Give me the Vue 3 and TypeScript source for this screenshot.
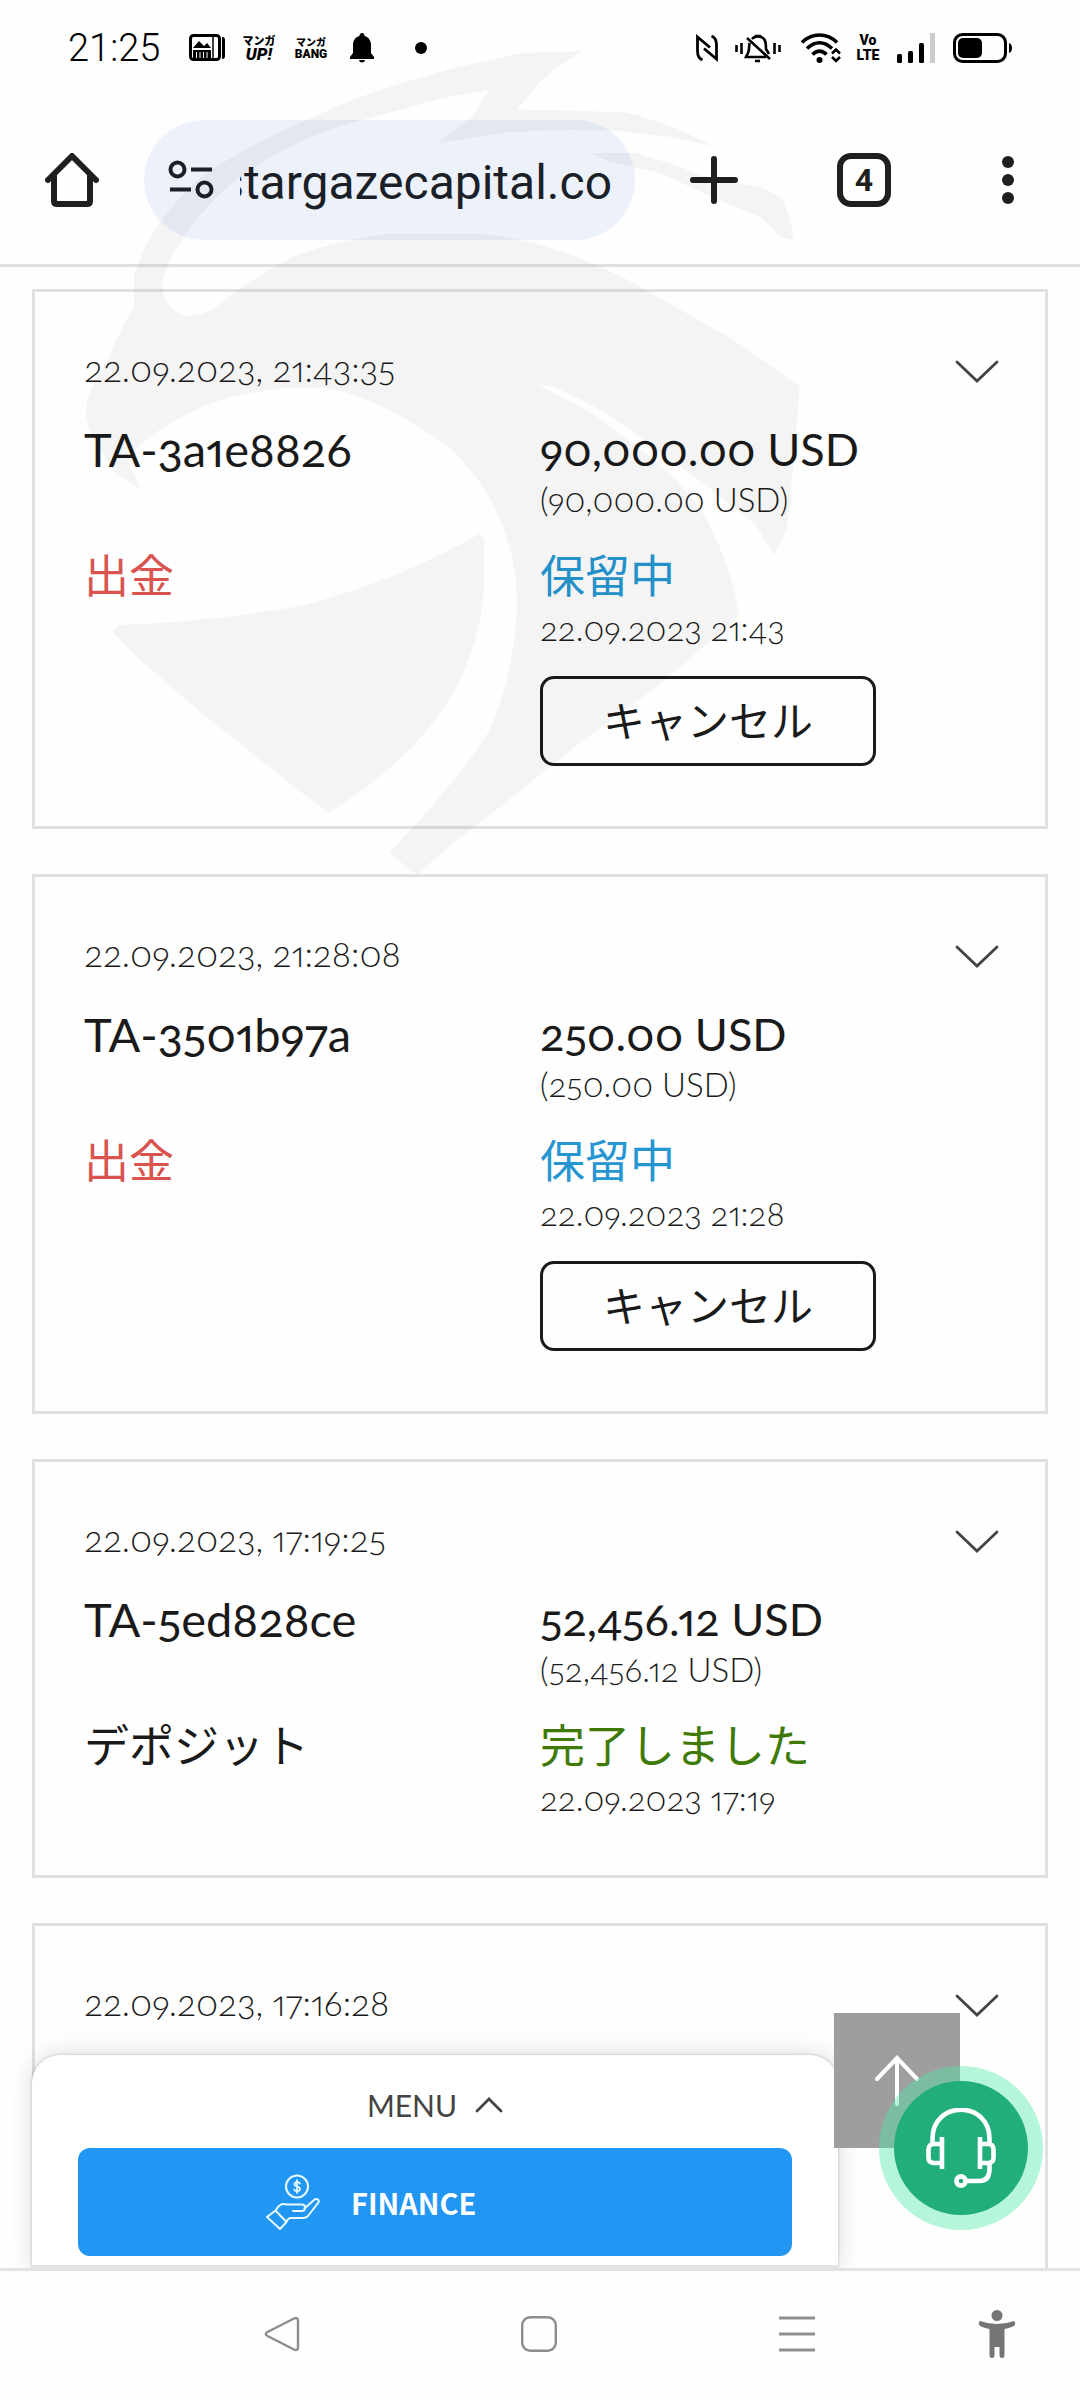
<script setup lang="ts">
import { ref } from 'vue'

interface Transaction {
  date: string
  id: string
  amount: string
  kind: string
  kindTone: 'red' | 'ink'
  status: string
  statusTone: 'blue' | 'green'
  updated: string
  cancellable: boolean
}

const address = ref('stargazecapital.co')

const transactions: Transaction[] = [
  { date: '22.09.2023, 21:43:35', id: 'TA-3a1e8826', amount: '90,000.00 USD', kind: '出金', kindTone: 'red', status: '保留中', statusTone: 'blue', updated: '22.09.2023 21:43', cancellable: true },
  { date: '22.09.2023, 21:28:08', id: 'TA-3501b97a', amount: '250.00 USD', kind: '出金', kindTone: 'red', status: '保留中', statusTone: 'blue', updated: '22.09.2023 21:28', cancellable: true },
  { date: '22.09.2023, 17:19:25', id: 'TA-5ed828ce', amount: '52,456.12 USD', kind: 'デポジット', kindTone: 'ink', status: '完了しました', statusTone: 'green', updated: '22.09.2023 17:19', cancellable: false },
]
const nextDate = '22.09.2023, 17:16:28'
</script>

<template>
  <div class="screen">
    <header class="status-bar">
      <div class="status-left">
        <time class="clock">21:25</time>
        <svg class="s-photo" width="37" height="28" viewBox="0 0 37 28">
          <rect x="1.5" y="1.5" width="29" height="24" rx="3" fill="none" stroke="#000" stroke-width="3" />
          <path d="M24 2v23" stroke="#000" stroke-width="1.5" />
          <path d="M4 14l6-7 5 5 3-3 4 5z" />
          <path d="M4 16h18v8H4z" />
          <path d="M7.500 18v6M11 18v6M14.500 18v6M18 18v6" stroke="#fff" stroke-width="1" />
          <path d="M33 3q3 0 3 3v16q0 3-3 3z" />
        </svg>
        <span class="app-tag manga-up"><span>マンガ</span><b>UP!</b></span>
        <span class="app-tag manga-bang"><span>マンガ</span><b>BANG</b></span>
        <svg class="s-bell" width="24" height="30" viewBox="0 0 24 30">
          <path d="M12 0q2.500 0 2.500 3C19 4 21 8 21 12v8l3 4v2H0v-2l3-4v-8C3 8 5 4 9.500 3 9.500 0 12 0 12 0z" />
          <path d="M9 27h6q-.5 2.500-3 2.500T9 27z" />
        </svg>
        <span class="s-dot"></span>
      </div>
      <div class="status-right">
        <svg width="22" height="28" viewBox="0 0 22 28" fill="none" stroke="#000" stroke-width="2.800">
          <path d="M6.500 26Q1.500 24 1.500 17V3L14 13.500M15.500 2q5 2 5 9v14L8 14.500" />
        </svg>
        <svg class="s-mute" width="46" height="30" viewBox="0 0 46 30" fill="none" stroke="#000" stroke-width="2.600">
          <path d="M1.500 12v7M6.500 10v11M39.500 10v11M44.500 12v7" />
          <path d="M17 6c3-3.500 9-3.500 12 0 2 2 2 5 2 10l3 5M14.500 10c-.5 3 0 7-1.500 10l-2 4h20M12 5l23 21" />
          <path d="M20 3h6M20 28h5" />
        </svg>
        <svg class="s-wifi" width="40" height="30" viewBox="0 0 40 30" fill="none" stroke="#000" stroke-width="3.600">
          <path d="M1 9.500C11-.5 26-.5 36 9.500M6 15.500c8-7.500 17-7.500 25 0M11.500 21.500c4.500-4.500 9.500-4.500 14 0" />
          <circle cx="18.500" cy="27" r="3" fill="#000" stroke="none" />
          <path d="M31 20.500l4-4 4 4M31 24l4 4 4-4" stroke-width="2.600" />
        </svg>
        <span class="volte"><span>Vo</span><span>LTE</span></span>
        <svg class="s-signal" width="39" height="30" viewBox="0 0 39 30">
          <rect x="0" y="21" width="5" height="9" rx="1.500" />
          <rect x="11" y="18" width="5" height="12" rx="1.500" />
          <rect x="22" y="10" width="5" height="20" rx="1.500" />
          <rect x="33" y="0" width="5" height="30" fill="#ccc" />
        </svg>
        <svg class="s-battery" width="59" height="30" viewBox="0 0 59 30">
          <rect x="1.500" y="1.500" width="51" height="27" rx="8" fill="none" stroke="#000" stroke-width="3" />
          <rect x="5" y="5" width="24" height="20" rx="5" />
          <path d="M56 10q3 1 3 5t-3 5z" />
        </svg>
      </div>
    </header>

    <div class="toolbar">
      <button class="icon-btn home" aria-label="Home">
        <svg width="54" height="54" viewBox="0 0 54 54" fill="none" stroke="#1f1f1f" stroke-width="6" stroke-linecap="round" stroke-linejoin="round">
          <path d="M3 27L27 3l24 24M9 23v25q0 3 3 3h30q3 0 3-3V23" />
        </svg>
      </button>
      <div class="address">
        <svg width="46" height="40" viewBox="0 0 46 40" fill="none" stroke="#1b1f27" stroke-width="4">
          <circle cx="9.500" cy="9.500" r="7" />
          <circle cx="36.500" cy="29.500" r="7" />
          <path d="M23 9.500h21M2 29.500h21" />
        </svg>
        <input v-model="address" type="text" aria-label="Address" dir="rtl" />
      </div>
      <button class="icon-btn plus" aria-label="New tab">
        <svg width="48" height="48" viewBox="0 0 48 48" stroke="#1f1f1f" stroke-width="6" stroke-linecap="round"><path d="M24 3v42M3 24h42" /></svg>
      </button>
      <button class="tabs" aria-label="Tabs">4</button>
      <button class="icon-btn more" aria-label="More">
        <svg width="12" height="48" viewBox="0 0 12 48" fill="#1f1f1f"><circle cx="6" cy="6" r="6" /><circle cx="6" cy="24" r="6" /><circle cx="6" cy="42" r="6" /></svg>
      </button>
    </div>

    <main class="list">
      <article v-for="t in transactions" :key="t.id" class="card">
        <div class="card-head">
          <time>{{ t.date }}</time>
          <button class="icon-btn" aria-label="Expand">
            <svg width="44" height="24" viewBox="0 0 44 24" fill="none" stroke="#444" stroke-width="2.800" stroke-linecap="round"><path d="M2 3l20 19L42 3" /></svg>
          </button>
        </div>
        <div class="card-row">
          <div class="strong reference">{{ t.id }}</div>
          <div>
            <div class="strong">{{ t.amount }}</div>
            <div class="small">({{ t.amount }})</div>
          </div>
        </div>
        <div class="card-row card-state">
          <div class="state" :class="t.kindTone">{{ t.kind }}</div>
          <div>
            <div class="state" :class="t.statusTone">{{ t.status }}</div>
            <div class="small">{{ t.updated }}</div>
            <button v-if="t.cancellable" class="cancel">キャンセル</button>
          </div>
        </div>
      </article>
      <article class="card card-last">
        <div class="card-head">
          <time>{{ nextDate }}</time>
          <button class="icon-btn" aria-label="Expand">
            <svg width="44" height="24" viewBox="0 0 44 24" fill="none" stroke="#444" stroke-width="2.800" stroke-linecap="round"><path d="M2 3l20 19L42 3" /></svg>
          </button>
        </div>
      </article>

      <section class="menu-panel">
        <button class="menu-toggle">
          MENU
          <svg width="28" height="16" viewBox="0 0 28 16" fill="none" stroke="#444" stroke-width="2.800" stroke-linecap="round"><path d="M2 14L14 2l12 12" /></svg>
        </button>
        <button class="finance">
          <svg width="56" height="56" viewBox="0 0 56 56" fill="none" stroke="#e9fbff" stroke-width="2" stroke-linejoin="round" stroke-linecap="round">
            <circle cx="32" cy="12.500" r="11" />
            <path d="M35 9.500c-1-2-5.500-2-5.500.8 0 3 5.500 1.700 5.500 4.700 0 2.800-5 2.800-6 .5M32 6v13" stroke-width="1.700" />
            <path d="M2 43l8.500-6.500 11 11.500-6.500 7zM10.500 36.500C14 30.500 17 29 22 30.500h15c4 0 4 6.500 0 6.500h-9M39.500 34.500L49 26c3-2.500 6 0 4 3L43 42q-2 2-5 2H26q-3 0-4.500 4" />
          </svg>
          FINANCE
        </button>
      </section>

      <button class="to-top" aria-label="Back to top">
        <svg width="44" height="52" viewBox="0 0 44 52" fill="none" stroke="#fff" stroke-width="4" stroke-linecap="round"><path d="M22 3v46M2 24L22 3l20 21" /></svg>
      </button>
      <button class="support" aria-label="Support">
        <svg width="70" height="80" viewBox="0 0 70 80" fill="none" stroke="#fff" stroke-width="4.600">
          <path d="M6.500 36V31C6.500-8 63.500-8 63.500 31v5" />
          <path d="M16 29v32M14 36H8q-5.500 0-5.500 5.500v8Q2.500 55 8 55h6" />
          <path d="M54 29v32M56 36h6q5.500 0 5.500 5.500v8Q67.500 55 62 55h-6" />
          <path d="M63.500 55v6q0 12-10 12H40" />
          <circle cx="35" cy="73" r="4.600" />
        </svg>
      </button>
    </main>

    <nav class="system-nav">
      <button class="icon-btn" aria-label="Back">
        <svg width="36" height="36" viewBox="0 0 36 36" fill="none" stroke="#8c8c8c" stroke-width="2.400" stroke-linejoin="round"><path d="M3.500 16L30 2.500q4-1.500 4 2v27q0 3.500-4 2L3.500 20q-3.500-2 0-4z" /></svg>
      </button>
      <button class="icon-btn" aria-label="Home screen">
        <svg width="36" height="36" viewBox="0 0 36 36" fill="none" stroke="#8c8c8c" stroke-width="2.400"><rect x="1.200" y="1.200" width="33.600" height="33.600" rx="8" /></svg>
      </button>
      <button class="icon-btn" aria-label="Recent apps">
        <svg width="36" height="36" viewBox="0 0 36 36" stroke="#8f8f8f" stroke-width="3"><path d="M0 2h36M0 18h36M0 34h36" /></svg>
      </button>
      <button class="icon-btn" aria-label="Accessibility">
        <svg width="38" height="48" viewBox="0 0 38 48" fill="#757575">
          <circle cx="19" cy="5.500" r="5.500" />
          <path d="M2 11q17 6 34 0 2.500 2 0 5-4 2-9.500 3v26q0 3-2.500 3t-2.500-3V37h-5v8q0 3-2.500 3t-2.500-3V19Q6 18 2 16-.5 13 2 11z" />
        </svg>
      </button>
    </nav>

    <svg class="watermark" width="820" height="880" viewBox="0 0 820 880" aria-hidden="true">
      <path d="M582 51L523 53Q410 75 331 109 240 148 200 178 148 225 134 276L134 307Q112 345 108 360L96 380Q84 400 86 418 92 442 117 474L141 490 127 459Q150 430 207 405 262 385 327 388 385 400 448 447 485 480 500 520 517 560 517 604 515 670 490 730 450 790 389 853L417 875Q455 840 500 807L581 742 659 685 739 616Q733 570 707 520 690 490 648 455L592 413 537 384 555 388Q600 405 659 451L707 486 755 524 774 555 787 528 793 470 800 386 729 337 626 279 585 260Q530 238 482 234L386 234Q340 240 296 255 245 282 220 304 205 316 185 316 165 308 162 287 165 265 180 243 200 210 238 178 300 135 362 120L448 97 489 90 472 117 437 143 510 132 568 130 619 131 671 137 712 146Q670 122 623 112L540 110 517 110 540 82 554 70z" />
      <path d="M590 153L636 153 681 167 712 180 760 187 781 197Q793 220 793 240L781 237 760 217 712 197 660 173 609 162z" />
      <path d="M112 631L119 625Q210 622 300 606 400 580 479 534L484 539 484 585Q482 640 455 689 420 755 329 813L293 786 200 712 138 658z" />
    </svg>
  </div>
</template>

<style>
body {
  margin: 0;
  background: #fff;
}
</style>

<style scoped>
.screen {
  position: relative;
  display: flex;
  flex-direction: column;
  height: 100vh;
  overflow: hidden;
  background: #fefefe;
  color: #1a1a1a;
  font-family: Lato, "Noto Sans CJK JP", sans-serif;
}

button {
  font: inherit;
  color: inherit;
  padding: 0;
  border: 0;
  background: none;
  cursor: pointer;
}

svg {
  display: block;
  flex: none;
}

.icon-btn {
  display: grid;
  place-items: center;
}

.status-bar {
  display: flex;
  flex: none;
  justify-content: space-between;
  height: 96px;
  padding: 0 68px;
  color: #000;
  font-family: Roboto, sans-serif;
}

.status-left,
.status-right {
  display: flex;
  align-items: center;
}

.clock {
  width: 121px;
  font-size: 38px;
  font-weight: 300;
  line-height: 48px;
}

.app-tag {
  display: flex;
  flex-direction: column;
  align-items: center;
  width: 34px;
  font: 900 11px/12px "Noto Sans CJK JP", sans-serif;
}

.app-tag b {
  font-weight: 900;
}

.manga-up {
  margin-left: 16px;
}

.manga-up b {
  font: italic 900 17px/16px Roboto, sans-serif;
}

.manga-bang {
  margin-left: 18px;
  font-size: 10px;
}

.manga-bang b {
  font: 900 12px/12px Roboto, sans-serif;
}

.s-bell {
  margin-left: 22px;
}

.s-dot {
  width: 12px;
  height: 12px;
  margin-left: 41px;
  border-radius: 50%;
  background: #000;
}

.s-mute {
  margin-left: 17px;
}

.s-wifi {
  margin-left: 20px;
}

.volte {
  display: flex;
  flex-direction: column;
  align-items: center;
  width: 24px;
  margin-left: 15px;
  font-size: 14px;
  font-weight: 900;
  line-height: 15px;
}

.s-signal {
  margin-left: 17px;
}

.s-battery {
  margin-left: 17px;
}

.toolbar {
  display: flex;
  flex: none;
  align-items: center;
  height: 168px;
  padding: 0 66px 0 45px;
  border-bottom: 3px solid #e0e0e0;
}

.address {
  display: flex;
  flex: 1;
  align-items: center;
  gap: 26px;
  box-sizing: border-box;
  min-width: 0;
  height: 120px;
  margin-left: 45px;
  padding: 0 23px 0 24px;
  border-radius: 60px;
  background: #edf1fa;
}

.address input {
  flex: 1;
  min-width: 0;
  height: 72px;
  padding: 4px 0 0;
  border: 0;
  outline: 0;
  background: none;
  color: #1b1f27;
  font: 48px/68px Roboto, sans-serif;
}

.plus {
  margin-left: 55px;
}

.tabs {
  box-sizing: border-box;
  width: 54px;
  height: 54px;
  margin-left: 99px;
  border: 6px solid #1f1f1f;
  border-radius: 14px;
  font: 700 32px/42px Roboto, sans-serif;
  color: #1f1f1f;
}

.more {
  margin-left: 111px;
}

.list {
  position: relative;
  display: flex;
  flex: 1;
  flex-direction: column;
  gap: 45px;
  min-height: 0;
  padding: 22px 32px 0;
  overflow: hidden;
}

.card {
  flex: none;
  padding: 49px 49px 55px;
  border: 3px solid #e0e0e0;
  font-variant-numeric: oldstyle-nums proportional-nums;
}

.card-last {
  flex: 1 0 0;
  padding-bottom: 0;
  border-bottom: 0;
}

.card-head {
  display: flex;
  align-items: center;
  justify-content: space-between;
  height: 60px;
  margin: 0 -3px 20px 0;
  font-size: 35px;
}

.card-head time {
  padding-bottom: 6px;
}

.card-row {
  display: grid;
  grid-template-columns: 1fr 1fr;
}

.card-state {
  margin-top: 25px;
}

.strong {
  font-size: 45px;
  line-height: 56px;
}

.reference {
  font-size: 47px;
}

.small {
  font-size: 33px;
  line-height: 44px;
}

.card-head,
.small {
  font-weight: 300;
}

.state {
  font-size: 45px;
  line-height: 60px;
}

.red {
  color: #d9534f;
}

.blue {
  color: #2596d1;
}

.green {
  color: #3f7a06;
}

.cancel {
  box-sizing: border-box;
  display: block;
  width: 336px;
  height: 90px;
  margin: 26px 0 5px;
  padding-bottom: 6px;
  border: 3px solid #1a1a1a;
  border-radius: 14px;
  font-size: 42px;
}

.menu-panel {
  position: absolute;
  right: 242px;
  bottom: 0;
  left: 32px;
  padding: 0 46px 9px;
  border-bottom: 3px solid #e3e3e3;
  border-radius: 28px 28px 0 0;
  background: #fff;
  box-shadow: 0 0 24px rgba(0, 0, 0, 0.14), 0 0 3px rgba(0, 0, 0, 0.24);
}

.menu-toggle {
  display: flex;
  align-items: center;
  justify-content: center;
  gap: 18px;
  width: 100%;
  height: 93px;
  padding-top: 6px;
  color: #444;
  font-size: 30px;
}

.finance {
  display: flex;
  align-items: center;
  gap: 30px;
  width: 100%;
  height: 108px;
  padding-left: 187px;
  border-radius: 12px;
  background: #2196f3;
  color: #fff;
  font: 700 29px/48px "Noto Sans CJK JP", sans-serif;
}

.to-top {
  position: absolute;
  right: 120px;
  bottom: 120px;
  display: grid;
  place-items: center;
  width: 126px;
  height: 135px;
  background: #9e9e9e;
}

.support {
  position: absolute;
  right: 52px;
  bottom: 53px;
  display: grid;
  place-items: center;
  width: 134px;
  height: 134px;
  border-radius: 50%;
  background: #22ae7a;
  box-shadow: 0 0 0 15px rgba(73, 235, 168, 0.4);
}

.system-nav {
  display: grid;
  flex: none;
  grid-template-columns: 258fr 258fr 258fr 143fr;
  box-sizing: border-box;
  height: 132px;
  padding: 0 12px 3px 153px;
  border-top: 3px solid #e3e3e3;
}

.watermark {
  position: absolute;
  top: 0;
  left: 0;
  fill: rgba(0, 0, 0, 0.04);
  pointer-events: none;
}
</style>
